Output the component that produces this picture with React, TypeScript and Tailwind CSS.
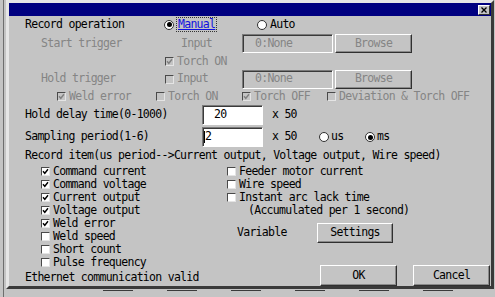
import React from "react";

const GREY = "text-[#858585]";

function Check({ checked = false, disabled = false }: { checked?: boolean; disabled?: boolean }) {
  return (
    <span
      className={`box-border w-[9px] h-[9px] shrink-0 border border-t-[#4a4a4a] border-l-[#4a4a4a] border-b-[#e4e4e4] border-r-[#e4e4e4] flex items-center justify-center ${
        disabled ? "bg-[#c4c4c4]" : "bg-white"
      }`}
    >
      {checked && (
        <svg width="7" height="7" viewBox="0 0 7 7">
          <polyline
            points="1,3.3 2.8,5.3 6,1.3"
            fill="none"
            stroke={disabled ? "#808080" : "#000"}
            strokeWidth="1.4"
          />
        </svg>
      )}
    </span>
  );
}

function Radio({ on = false }: { on?: boolean }) {
  return (
    <span className="box-border w-[10px] h-[10px] shrink-0 rounded-full border border-[#303030] bg-white flex items-center justify-center">
      {on && <span className="w-[5px] h-[5px] rounded-full bg-black" />}
    </span>
  );
}

function Btn({
  label,
  w,
  h,
  disabled = false,
}: {
  label: string;
  w: string;
  h: string;
  disabled?: boolean;
}) {
  return (
    <div
      className={`box-border ${w} ${h} shrink-0 border border-t-white border-l-white border-r-[#303030] border-b-[#303030] shadow-[inset_-1px_-1px_0_#8a8a8a] flex items-center justify-center ${
        disabled ? GREY : "text-black"
      }`}
    >
      {label}
    </div>
  );
}

function Field({
  w,
  h,
  disabled = false,
  children,
  extra = "",
}: {
  w: string;
  h: string;
  disabled?: boolean;
  children?: React.ReactNode;
  extra?: string;
}) {
  return (
    <div
      className={`box-border ${w} ${h} shrink-0 border border-t-[#7a7a7a] border-l-[#7a7a7a] border-b-white border-r-white shadow-[inset_1px_1px_0_#3a3a3a] flex ${
        disabled ? "bg-[#c4c4c4] text-[#858585]" : "bg-white text-black"
      } ${extra}`}
    >
      {children}
    </div>
  );
}

function CheckItem({
  label,
  checked = false,
  disabled = false,
  w = "",
}: {
  label: string;
  checked?: boolean;
  disabled?: boolean;
  w?: string;
}) {
  return (
    <div className={`flex items-center ${w}`}>
      <Check checked={checked} disabled={disabled} />
      <span className={`ml-[3px] whitespace-pre ${disabled ? GREY : ""}`}>{label}</span>
    </div>
  );
}

export default function App() {
  const left: [string, boolean][] = [
    ["Command current", true],
    ["Command voltage", true],
    ["Current output", true],
    ["Voltage output", true],
    ["Weld error", true],
    ["Weld speed", false],
    ["Short count", false],
    ["Pulse frequency", false],
  ];
  const right = ["Feeder motor current", "Wire speed", "Instant arc lack time"];

  return (
    <div className="w-[495px] h-[297px] bg-[#c4c4c4] overflow-hidden flex flex-col font-['DejaVu_Sans_Mono',monospace] text-[11.5px] tracking-[-0.72px] text-black leading-none">
      <div className="flex h-[289px]">
        {/* desktop strip on the left */}
        <div className="w-[3px]" />
        <div className="w-[1px] bg-[#6e6e6e]" />
        <div className="w-[2px]" />

        {/* dialog */}
        <div className="box-border w-[488px] h-[289px] border-[3px] border-t-[#e6e6e6] border-l-[#e6e6e6] border-r-[#3a3a3a] border-b-[#3a3a3a] bg-[#c4c4c4] flex flex-col">
          {/* title bar */}
          <div className="h-[13px] bg-[#000080] flex items-center justify-end pr-[1px]">
            <div className="box-border w-[12px] h-[10px] bg-[#c4c4c4] border border-t-white border-l-white border-r-[#303030] border-b-[#303030] flex items-center justify-center">
              <svg width="6" height="6" viewBox="0 0 6 6">
                <path d="M0.5 0.5 L5.5 5.5 M5.5 0.5 L0.5 5.5" stroke="#000" strokeWidth="1.3" />
              </svg>
            </div>
          </div>

          {/* Row 1: Record operation */}
          <div className="h-[17px] flex items-center pl-[16px]">
            <span className="w-[139px]">Record operation</span>
            <div className="w-[93px] flex items-center">
              <Radio on />
              <span className="ml-[2px] box-border border border-dotted border-[#333] px-[1px] py-[1px] text-[#1010e0] underline">
                Manual
              </span>
            </div>
            <div className="flex items-center">
              <Radio />
              <span className="ml-[3px]">Auto</span>
            </div>
          </div>

          {/* Row 2: Start trigger */}
          <div className="h-[21px] flex items-center pl-[32px]">
            <span className={`w-[140px] ${GREY}`}>Start trigger</span>
            <span className={`w-[61px] ${GREY}`}>Input</span>
            <Field w="w-[91px]" h="h-[19px]" disabled extra="items-center pl-[12px]">
              0:None
            </Field>
            <div className="ml-[2px]">
              <Btn label="Browse" w="w-[77px]" h="h-[19px]" disabled />
            </div>
          </div>

          {/* Row 3: Torch ON */}
          <div className="h-[15px] flex items-center pl-[156px]">
            <CheckItem label="Torch ON" checked disabled />
          </div>

          {/* Row 4: Hold trigger */}
          <div className="h-[20px] flex items-center pl-[32px]">
            <span className={`w-[124px] ${GREY}`}>Hold trigger</span>
            <CheckItem label="Input" disabled w="w-[77px]" />
            <Field w="w-[91px]" h="h-[19px]" disabled extra="items-center pl-[12px]">
              0:None
            </Field>
            <div className="ml-[2px]">
              <Btn label="Browse" w="w-[77px]" h="h-[19px]" disabled />
            </div>
          </div>

          {/* Row 5: hold trigger options */}
          <div className="h-[15px] flex items-center pl-[48px]">
            <CheckItem label="Weld error" checked disabled w="w-[99px]" />
            <CheckItem label="Torch ON" disabled w="w-[86px]" />
            <CheckItem label="Torch OFF" checked disabled w="w-[85px]" />
            <CheckItem label="Deviation & Torch OFF" disabled />
          </div>

          {/* Row 6: Hold delay */}
          <div className="h-[22px] flex items-center pl-[16px]">
            <span className="w-[177px]">Hold delay time(0-1000)</span>
            <Field w="w-[61px]" h="h-[20px]" extra="items-start pl-[11px] pt-[3px]">
              20
            </Field>
            <span className="ml-[9px]">x 50</span>
          </div>

          {/* Row 7: Sampling period */}
          <div className="h-[22px] flex items-center pl-[16px]">
            <span className="w-[177px]">Sampling period(1-6)</span>
            <Field w="w-[61px]" h="h-[20px]" extra="items-center pl-[1px]">
              <span className="w-[1px] h-[12px] bg-black" />
              <span>2</span>
            </Field>
            <span className="ml-[9px] w-[47px]">x 50</span>
            <div className="w-[46px] flex items-center">
              <Radio />
              <span className="ml-[2px]">us</span>
            </div>
            <div className="flex items-center">
              <Radio on />
              <span className="ml-[2px]">ms</span>
            </div>
          </div>

          {/* Row 8: Record item */}
          <div className="h-[16px] flex items-center pl-[16px] whitespace-pre">
            Record item(us period--&gt;Current output, Voltage output, Wire speed)
          </div>

          {/* Bottom section */}
          <div className="flex flex-1">
            <div className="w-[218px] pl-[16px] pt-[1px] flex flex-col">
              <div className="pl-[16px] flex flex-col">
                {left.map(([l, c]) => (
                  <div key={l} className="h-[13px] flex items-center">
                    <CheckItem label={l} checked={c} />
                  </div>
                ))}
              </div>
              <div className="h-[17px] flex items-center">Ethernet communication valid</div>
            </div>

            <div className="flex-1 pt-[1px] flex flex-col">
              {right.map((l) => (
                <div key={l} className="h-[13px] flex items-center">
                  <CheckItem label={l} />
                </div>
              ))}
              <div className="h-[13px] flex items-center pl-[21px] whitespace-pre">
                (Accumulated per 1 second)
              </div>
              <div className="mt-[6px] h-[20px] flex items-center pl-[10px]">
                <span className="w-[80px]">Variable</span>
                <Btn label="Settings" w="w-[76px]" h="h-[20px]" />
              </div>
              <div className="mt-[22px] h-[21px] flex pl-[93px]">
                <Btn label="OK" w="w-[77px]" h="h-[21px]" />
                <div className="ml-[16px]">
                  <Btn label="Cancel" w="w-[77px]" h="h-[21px]" />
                </div>
              </div>
            </div>
          </div>
        </div>
      </div>

      {/* strip under the dialog */}
      <div className="flex-1 flex">
        <div className="w-[3px]" />
        <div className="w-[1px] bg-[#6e6e6e]" />
        <div className="flex-1 pt-[1px] pl-[99px] flex gap-[34px]">
          {[0, 1, 2, 3, 4, 5].map((i) => (
            <div key={i} className="w-[30px] h-[2px] border-t border-[#3a3a3a]" />
          ))}
        </div>
      </div>
    </div>
  );
}
